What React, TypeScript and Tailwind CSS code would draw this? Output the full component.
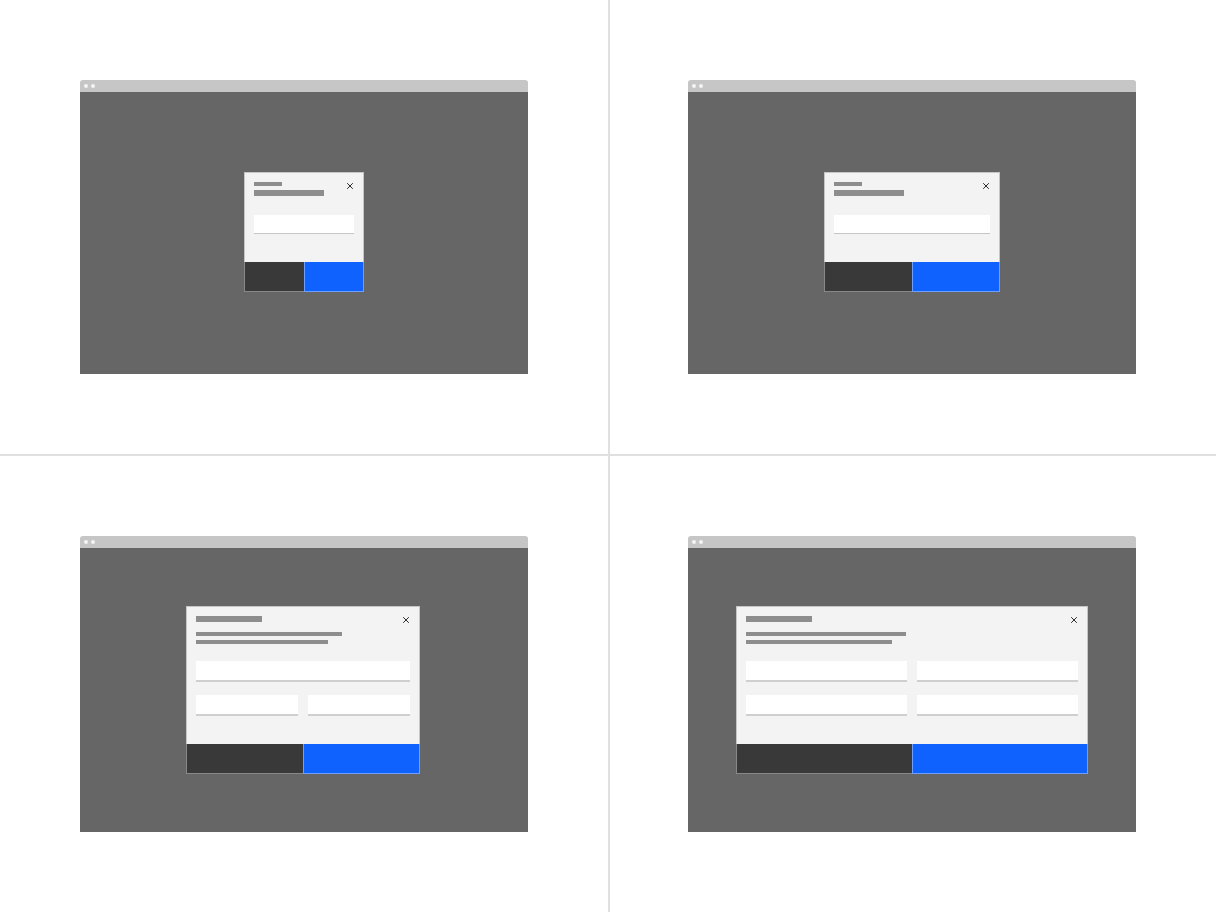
import React from "react";

type Variant = "small" | "medium" | "large" | "wide";

function CloseIcon() {
  return (
    <svg
      className="absolute top-[9px] right-[9px]"
      width="8"
      height="8"
      viewBox="0 0 8 8"
      fill="none"
    >
      <path d="M1.2 1.2L6.8 6.8M6.8 1.2L1.2 6.8" stroke="#161616" strokeWidth="0.9" />
    </svg>
  );
}

function Field({ tall }: { tall?: boolean }) {
  return tall ? (
    <div className="h-[21px] bg-white border-b-2 border-[#cfcfcf]" />
  ) : (
    <div className="h-[19px] bg-white border-b border-[#c6c6c6]" />
  );
}

function Actions() {
  return (
    <div className="flex h-[30px]">
      <div className="flex-1 bg-[#393939] border-l border-b border-white/40" />
      <div className="flex-1 bg-[#0f62fe] border-l border-r border-b border-white/40" />
    </div>
  );
}

function Modal({ variant }: { variant: Variant }) {
  if (variant === "small" || variant === "medium") {
    return (
      <div
        className={
          variant === "small"
            ? "w-[120px] mb-[2px] flex flex-col"
            : "w-[176px] mb-[2px] flex flex-col"
        }
      >
        <div className="relative h-[90px] bg-[#f3f3f3] border-t border-x border-[#c6c6c6] px-[9px] pt-[9px]">
          <div className="h-[4px] w-[28px] bg-[#8d8d8d]" />
          <div className="mt-[4px] h-[6px] w-[70px] bg-[#8d8d8d]" />
          <div className="mt-[19px]">
            <Field />
          </div>
          <CloseIcon />
        </div>
        <Actions />
      </div>
    );
  }

  const wide = variant === "wide";
  return (
    <div className={wide ? "w-[352px] flex flex-col" : "w-[234px] mr-[2px] flex flex-col"}>
      <div className="relative h-[138px] bg-[#f3f3f3] border-t border-x border-[#c6c6c6] px-[9px] pt-[9px]">
        <div className="h-[6px] w-[66px] bg-[#8d8d8d]" />
        <div className={wide ? "mt-[10px] h-[4px] w-[160px] bg-[#8d8d8d]" : "mt-[10px] h-[4px] w-[146px] bg-[#8d8d8d]"} />
        <div className={wide ? "mt-[4px] h-[4px] w-[146px] bg-[#8d8d8d]" : "mt-[4px] h-[4px] w-[132px] bg-[#8d8d8d]"} />
        {wide ? (
          <div className="mt-[17px] grid grid-cols-2 gap-x-[10px] gap-y-[13px]">
            <Field tall />
            <Field tall />
            <Field tall />
            <Field tall />
          </div>
        ) : (
          <div className="mt-[17px] flex flex-col gap-[13px]">
            <Field tall />
            <div className="grid grid-cols-2 gap-[10px]">
              <Field tall />
              <Field tall />
            </div>
          </div>
        )}
        <CloseIcon />
      </div>
      <Actions />
    </div>
  );
}

function BrowserFrame({ variant, tall }: { variant: Variant; tall?: boolean }) {
  return (
    <div className="w-[448px]">
      <div className="h-[12px] bg-[#c6c6c6] rounded-t-[3px] flex items-center gap-[3px] pl-[4px]">
        <span className="block w-[4px] h-[4px] rounded-full bg-[#f4f4f4]" />
        <span className="block w-[4px] h-[4px] rounded-full bg-[#f4f4f4]" />
      </div>
      <div
        className={
          tall
            ? "h-[284px] bg-[#666666] flex items-center justify-center"
            : "h-[282px] bg-[#666666] flex items-center justify-center"
        }
      >
        <Modal variant={variant} />
      </div>
    </div>
  );
}

export default function App() {
  return (
    <div className="w-[1216px] h-[912px] bg-white grid grid-cols-2 grid-rows-2">
      <div className="h-[456px] border-b-2 border-[#e0e0e0] pl-[80px] pt-[80px]">
        <BrowserFrame variant="small" />
      </div>
      <div className="h-[456px] border-b-2 border-l-2 border-[#e0e0e0] pl-[78px] pt-[80px]">
        <BrowserFrame variant="medium" />
      </div>
      <div className="h-[456px] pl-[80px] pt-[80px]">
        <BrowserFrame variant="large" tall />
      </div>
      <div className="h-[456px] border-l-2 border-[#e0e0e0] pl-[78px] pt-[80px]">
        <BrowserFrame variant="wide" tall />
      </div>
    </div>
  );
}
